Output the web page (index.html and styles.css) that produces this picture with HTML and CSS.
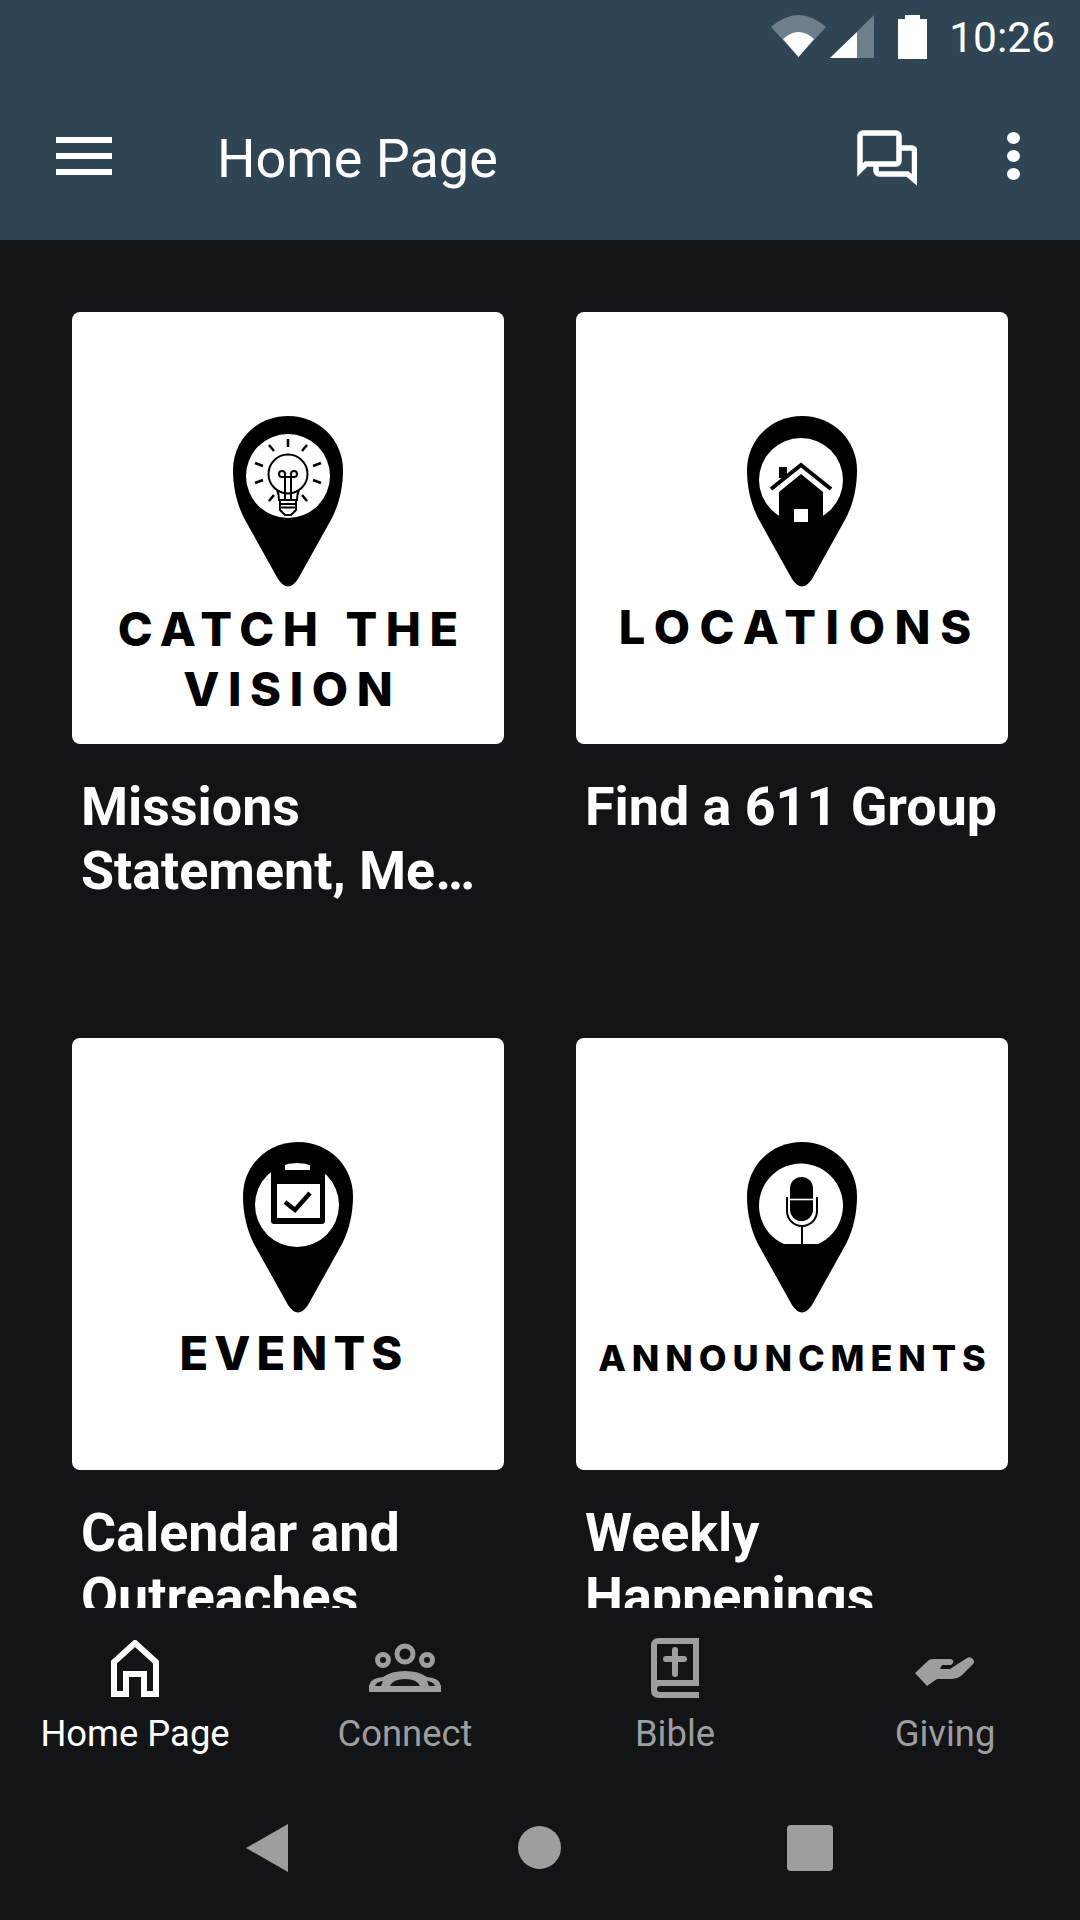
FILE: index.html
```html
<!DOCTYPE html>
<html lang="en">
<head>
<meta charset="UTF-8">
<meta name="viewport" content="width=device-width, initial-scale=1.0">
<title>Home Page</title>
<link rel="stylesheet" href="styles.css">
</head>
<body>
    <header class="appbar">
        <div class="statusbar">
            <svg class="wifi" viewBox="0 0 55 42"><path class="dim" d="M0 12Q27.5-12 55 12L27.5 42Z"/><path class="lit" d="M12 24Q27.5 10 43 24L27.5 42Z"/></svg>
            <svg class="signal" viewBox="0 0 44 43"><path class="dim" d="M44 0V43H0Z"/><path class="lit" d="M0 43L27 17V43Z"/></svg>
            <svg class="battery" viewBox="0 0 29 44"><path class="lit" d="M7 0H22V4H29V44H0V4H7Z"/></svg>
            <span class="clock">10:26</span>
        </div>
        <div class="toolbar">
            <div class="hamburger"><span></span><span></span><span></span></div>
            <h1>Home Page</h1>
            <svg class="chat" viewBox="0 0 60 56">
                <path d="M3 40V6a3 3 0 0 1 3-3h33a3 3 0 0 1 3 3v25a3 3 0 0 1-3 3H9z"/>
                <path d="M42 18h13a2.5 2.5 0 0 1 2.5 2.5V50l-7-6H22a3 3 0 0 1-3-3v-7"/>
            </svg>
            <div class="dots"><span></span><span></span><span></span></div>
        </div>
    </header>

    <main class="content">
        <div class="tile">
            <div class="card">
                <svg class="pin" viewBox="0 0 110 172">
                    <path d="M55 0C86 0 110 24 110 54C110 72 106 88 99 102L65 163Q55 178 45 163L11 102C4 88 0 72 0 54C0 24 24 0 55 0Z"/>
                    <circle class="hole" cx="55" cy="60" r="42"/>
                    <g class="thin">
                        <circle cx="55" cy="58" r="19.5"/>
                        <path d="M44 74Q46 78 46 84H64Q64 78 66 74"/>
                        <path d="M52 84V58M58 84V58M52 58a3 3 0 1 0-3 3h12a3 3 0 1 0-3-3"/>
                        <path d="M47 84V94L52 99H58L63 94V84M47 88H63M47 91.5H63"/>
                    </g>
                    <g class="ray">
                        <path d="M55 23V31M36 29L41 35M74 29L69 35M22 47L30 50M88 47L80 50M22 67L30 64M88 67L80 64M36 85L41 79M74 85L69 79"/>
                    </g>
                </svg>
                <div class="logo-text logo-vision">CATCH THE<br>VISION</div>
            </div>
            <h2>Missions<br>Statement, Me…</h2>
        </div>
        <div class="tile">
            <div class="card">
                <svg class="pin pin-shift" viewBox="0 0 110 172">
                    <path d="M55 0C86 0 110 24 110 54C110 72 106 88 99 102L65 163Q55 178 45 163L11 102C4 88 0 72 0 54C0 24 24 0 55 0Z"/>
                    <circle class="hole" cx="54" cy="64" r="42"/>
                    <path d="M32 51H40V62H32Z"/>
                    <path class="roof" d="M24 73L54 49L84 73"/>
                    <path d="M54 58L76 76V112H32V76Z"/>
                    <rect class="hole" x="47" y="93" width="14" height="13"/>
                </svg>
                <div class="logo-text logo-locations">LOCATIONS</div>
            </div>
            <h2>Find a 611 Group</h2>
        </div>
        <div class="tile">
            <div class="card">
                <svg class="pin pin-shift" viewBox="0 0 110 172">
                    <path d="M55 0C86 0 110 24 110 54C110 72 106 88 99 102L65 163Q55 178 45 163L11 102C4 88 0 72 0 54C0 24 24 0 55 0Z"/>
                    <circle class="hole" cx="54" cy="63" r="42"/>
                    <path d="M28 18H42V28H67V18H82V79a3 3 0 0 1-3 3H31a3 3 0 0 1-3-3Z"/>
                    <rect class="hole" x="34" y="42" width="43" height="34"/>
                    <path class="check" d="M42 60L52 68L67 51"/>
                </svg>
                <div class="logo-text logo-events">EVENTS</div>
            </div>
            <h2>Calendar and<br>Outreaches</h2>
        </div>
        <div class="tile">
            <div class="card">
                <svg class="pin pin-shift" viewBox="0 0 110 172">
                    <path d="M55 0C86 0 110 24 110 54C110 72 106 88 99 102L65 163Q55 178 45 163L11 102C4 88 0 72 0 54C0 24 24 0 55 0Z"/>
                    <path class="hole" d="M37 102A42 42 0 1 1 71 102Z"/>
                    <rect x="43" y="35" width="23" height="44" rx="11.5"/>
                    <path class="mic-line" d="M43 57.5H66"/>
                    <path class="thin" d="M40 55V69a15 15 0 0 0 30 0V55M55 84V104"/>
                </svg>
                <div class="logo-text logo-announce">ANNOUNCMENTS</div>
            </div>
            <h2>Weekly<br>Happenings</h2>
        </div>
    </main>

    <nav class="tabs">
        <div class="tab active">
            <div class="tab-icon">
                <svg width="48" height="57" viewBox="0 0 48 57"><path class="home" d="M3 54V22L24 3L45 22V54H33V34H15V54Z"/></svg>
            </div>
            <span>Home Page</span>
        </div>
        <div class="tab">
            <div class="tab-icon">
                <svg width="72" height="50" viewBox="0 0 72 50">
                    <circle class="ring" cx="36" cy="11" r="8"/>
                    <circle class="ring" cx="14" cy="17" r="5.5"/>
                    <circle class="ring" cx="58" cy="17" r="5.5"/>
                    <path class="solid" fill-rule="evenodd" d="M0 49V43Q1 35 14 34Q22 28 36 28Q50 28 58 34Q71 35 72 43V49ZM21 43H51Q48 36 36 36Q24 36 21 43ZM6 43H12L14 38Q7 39 6 43ZM60 43H66Q65 39 58 38Z"/>
                </svg>
            </div>
            <span>Connect</span>
        </div>
        <div class="tab">
            <div class="tab-icon">
                <svg width="48" height="60" viewBox="0 0 48 60">
                    <path class="solid" fill-rule="evenodd" d="M48 0H8Q0 0 0 8V52Q0 60 8 60H48V54H9Q6 54 6 51Q6 48 9 48H48ZM6 6H42V42H6Z"/>
                    <path class="cross" d="M24 12V36M15 21H33"/>
                </svg>
            </div>
            <span>Bible</span>
        </div>
        <div class="tab">
            <div class="tab-icon give">
                <svg width="60" height="30" viewBox="0 0 60 30">
                    <path class="solid" d="M0 17L14 4Q16 3 18 3H36Q39 4 38 7Q37 9 35 9H27L25 13H35L52 2Q55 0 58 3Q60 6 58 8L46 20Q42 23 37 23H22L12 30Z"/>
                </svg>
            </div>
            <span>Giving</span>
        </div>
    </nav>

    <footer class="sysbar">
        <span class="back"></span>
        <span class="circle"></span>
        <span class="square"></span>
    </footer>
</body>
</html>
```

FILE: styles.css
```css
* {
    box-sizing: border-box;
}
body {
    margin: 0;
    width: 1080px;
    height: 1920px;
    overflow: hidden;
    display: flex;
    flex-direction: column;
    background-color: #121416;
    color: #fff;
    font-family: Roboto, "Liberation Sans", sans-serif;
}

/* top bar */
.appbar {
    height: 240px;
    background-color: #2f4554;
}
.statusbar {
    height: 72px;
    padding: 15px 25px 0 0;
    display: flex;
    justify-content: flex-end;
    align-items: flex-start;
}
.dim {
    fill: #6c7f8b;
}
.lit {
    fill: #fff;
}
.wifi {
    width: 55px;
    height: 42px;
}
.signal {
    width: 44px;
    height: 43px;
    margin-left: 4px;
}
.battery {
    width: 29px;
    height: 44px;
    margin-left: 24px;
}
.clock {
    margin-left: 22px;
    font-size: 42.5px;
    line-height: 46px;
}
.toolbar {
    height: 168px;
    padding: 0 0 0 56px;
    display: flex;
    align-items: center;
}
.hamburger {
    width: 56px;
    height: 38px;
    display: flex;
    flex-direction: column;
    justify-content: space-between;
}
.hamburger span {
    height: 6px;
    background-color: #fff;
}
.toolbar h1 {
    margin: 5px 0 0 105px;
    font-size: 54px;
    font-weight: 400;
    line-height: 64px;
    flex: 1;
}
.chat {
    width: 60px;
    height: 56px;
    margin-top: 3px;
    fill: none;
    stroke: #fff;
    stroke-width: 5.5;
}
.dots {
    width: 13px;
    height: 48px;
    margin: 0 60px 0 90px;
    display: flex;
    flex-direction: column;
    justify-content: space-between;
}
.dots span {
    height: 12px;
    border-radius: 50%;
    background-color: #fff;
}

/* grid of tiles */
.content {
    height: 1368px;
    overflow: hidden;
    padding: 72px 72px 0;
    display: grid;
    grid-template-columns: 432px 432px;
    grid-auto-rows: 726px;
    column-gap: 72px;
}
.card {
    width: 432px;
    height: 432px;
    padding-top: 104px;
    background-color: #fff;
    border-radius: 8px;
    display: flex;
    flex-direction: column;
    align-items: center;
    color: #000;
}
.tile h2 {
    margin: 31px 0 0;
    padding-left: 9px;
    font-size: 53.8px;
    font-weight: 700;
    line-height: 64px;
}
.pin {
    width: 110px;
    height: 172px;
    flex: none;
    fill: #000;
}
.pin-shift {
    margin-left: 20px;
}
.pin .hole {
    fill: #fff;
}
.pin .thin {
    fill: none;
    stroke: #000;
    stroke-width: 2;
}
.pin .ray {
    fill: none;
    stroke: #000;
    stroke-width: 2.5;
}
.pin .roof {
    fill: none;
    stroke: #000;
    stroke-width: 4;
}
.pin .check {
    fill: none;
    stroke: #000;
    stroke-width: 4.5;
}
.pin .mic-line {
    stroke: #fff;
    stroke-width: 1.6;
}

/* logo wording inside the cards */
.logo-text {
    font-family: Inter, "Liberation Sans", sans-serif;
    font-weight: 800;
    font-size: 47px;
    line-height: 60px;
    text-align: center;
    white-space: nowrap;
}
.logo-vision {
    margin-top: 11px;
    letter-spacing: 8.6px;
    padding-left: 8.6px;
}
.logo-locations {
    margin-top: 9px;
    margin-left: 6px;
    letter-spacing: 9.6px;
    padding-left: 9.6px;
}
.logo-events {
    margin-top: 9px;
    margin-left: 6px;
    letter-spacing: 6.1px;
    padding-left: 6.1px;
}
.logo-announce {
    margin-top: 14px;
    font-size: 36px;
    letter-spacing: 5.9px;
    padding-left: 5.9px;
}

/* bottom tabs */
.tabs {
    height: 172px;
    padding-top: 30px;
    display: grid;
    grid-template-columns: repeat(4, 270px);
}
.tab {
    display: flex;
    flex-direction: column;
    align-items: center;
    color: #9c9ea0;
    font-size: 36.4px;
    line-height: 40px;
}
.tab.active {
    color: #fff;
}
.tab-icon {
    height: 60px;
    margin-bottom: 16px;
    display: flex;
    align-items: center;
}
.tab-icon.give {
    padding-top: 6px;
}
.tab-icon svg {
    display: block;
}
.home {
    fill: none;
    stroke: #fff;
    stroke-width: 6;
}
.ring {
    fill: none;
    stroke: #9c9ea0;
    stroke-width: 5;
}
.solid {
    fill: #9c9ea0;
}
.cross {
    fill: none;
    stroke: #9c9ea0;
    stroke-width: 6;
    stroke-linecap: round;
}

/* android buttons */
.sysbar {
    flex: 1;
    position: relative;
}
.sysbar span {
    position: absolute;
    background-color: #9e9e9e;
}
.back {
    left: 246px;
    top: 44px;
    width: 42px;
    height: 48px;
    clip-path: polygon(100% 0, 100% 100%, 0 50%);
}
.circle {
    left: 518px;
    top: 46px;
    width: 43px;
    height: 43px;
    border-radius: 50%;
}
.square {
    left: 787px;
    top: 45px;
    width: 46px;
    height: 46px;
    border-radius: 4px;
}
```
